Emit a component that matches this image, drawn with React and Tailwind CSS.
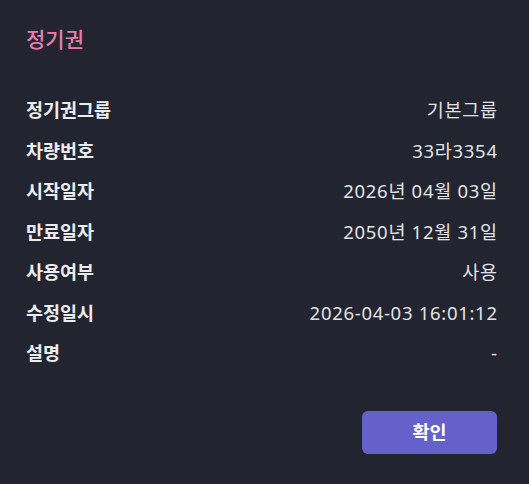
import React from 'react';

const rows = [
    ['정기권그룹', '기본그룹'],
    ['차량번호', '33라3354'],
    ['시작일자', '2026년 04월 03일'],
    ['만료일자', '2050년 12월 31일'],
    ['사용여부', '사용'],
    ['수정일시', '2026-04-03 16:01:12'],
    ['설명', '-'],
];

export default function App() {
    return (
        <div
            className="w-[529px] h-[484px] bg-[#22252f] text-[#e6e6ea] pl-[26px] pr-[32px] pt-[24px]"
            style={{ fontFamily: '"Noto Sans CJK KR", "Noto Sans", sans-serif' }}
        >
            <h1 className="text-[21px] font-medium text-[#e37fae] leading-[28px]">정기권</h1>
            <div className="mt-[38px] flex flex-col">
                {rows.map(([label, value]) => (
                    <div key={label} className="flex justify-between items-center h-[40.5px] text-[18.5px]">
                        <span className="font-bold text-[#ecedf0]">{label}</span>
                        <span
                            className="text-[#e2e3e8] tracking-[0.7px] -mr-[0.7px]"
                            style={{ fontFamily: '"Noto Sans", "Noto Sans CJK KR", sans-serif' }}
                        >
                            {value}
                        </span>
                    </div>
                ))}
            </div>
            <div className="flex justify-end mt-[37px]">
                <button className="w-[135px] h-[43px] rounded-[6px] bg-[#6461cb] text-white text-[18.5px] font-bold">
                    확인
                </button>
            </div>
        </div>
    );
}
